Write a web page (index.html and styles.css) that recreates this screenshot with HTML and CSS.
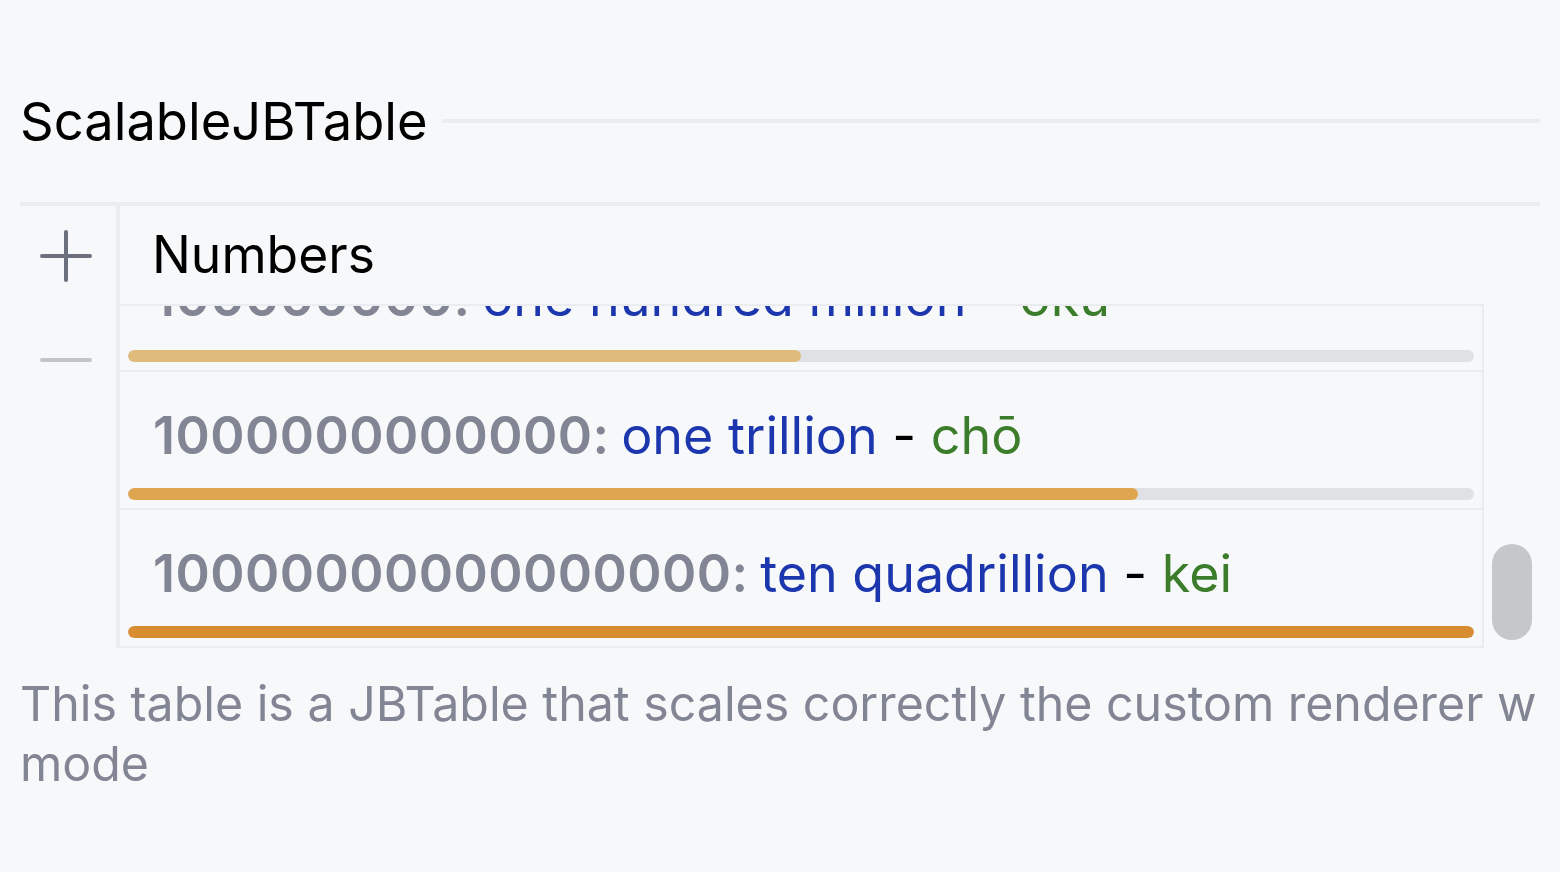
FILE: index.html
```html
<!DOCTYPE html>
<html>
<head>
<meta charset="utf-8">
<link rel="stylesheet" href="styles.css">
</head>
<body>
<div class="page">
  <div class="title-row">
    <div class="title">ScalableJBTable</div>
    <div class="title-sep"></div>
  </div>
  <div class="table">
    <div class="toolbar">
      <svg class="tb-icon" width="52" height="52" viewBox="0 0 52 52"><path d="M2 26H50M26 2V50" stroke="#6c707e" stroke-width="4" stroke-linecap="round" fill="none"/></svg>
      <svg class="tb-icon" width="52" height="52" viewBox="0 0 52 52"><path d="M2 26H50" stroke="#c4c5ca" stroke-width="4" stroke-linecap="round" fill="none"/></svg>
    </div>
    <div class="main">
      <div class="header">Numbers</div>
      <div class="body">
        <div class="viewport">
          <div class="rows">
            <div class="row">
              <div class="row-text"><span class="num">100000000:</span> <span class="en">one hundred million</span> - <span class="jp">oku</span></div>
              <div class="bar"><div class="fill fill-1" style="width:50%"></div></div>
            </div>
            <div class="row">
              <div class="row-text"><span class="num">1000000000000:</span> <span class="en">one trillion</span> - <span class="jp">chō</span></div>
              <div class="bar"><div class="fill fill-2" style="width:75%"></div></div>
            </div>
            <div class="row">
              <div class="row-text"><span class="num">10000000000000000:</span> <span class="en">ten quadrillion</span> - <span class="jp">kei</span></div>
              <div class="bar"><div class="fill fill-3" style="width:100%"></div></div>
            </div>
          </div>
        </div>
        <div class="scrollbar"><div class="thumb"></div></div>
      </div>
    </div>
  </div>
  <div class="desc">
    <div class="desc-line">This table is a JBTable that scales correctly the custom renderer when in presentation</div>
    <div class="desc-line">mode</div>
  </div>
</div>
</body>
</html>
```

FILE: styles.css
```css
html, body {
  margin: 0;
  padding: 0;
  background: #f7f8fa;
}
body {
  font-family: Inter, "Noto Sans", sans-serif;
  color: #000;
  width: 1560px;
  height: 872px;
  overflow: hidden;
}
.page {
  padding: 0 20px;
}
.title-row {
  display: flex;
  align-items: center;
  gap: 14px;
  margin-top: 91px;
}
.title {
  font-size: 52.5px;
  line-height: 60px;
  white-space: nowrap;
}
.title-sep {
  flex: 1;
  height: 4px;
  background: #ebecf0;
}
.table {
  margin-top: 51px;
  border-top: 4px solid #ebecf0;
  display: flex;
}
.toolbar {
  width: 100px;
  border-right: 4px solid #ebecf0;
  display: flex;
  flex-direction: column;
  padding: 24px 0 0 20px;
  box-sizing: border-box;
  gap: 52px;
}
.tb-icon {
  display: block;
}
.main {
  flex: 1;
  display: flex;
  flex-direction: column;
}
.header {
  height: 98px;
  box-sizing: border-box;
  padding: 18px 0 0 32px;
  font-size: 51.6px;
  line-height: 60px;
}
.body {
  display: flex;
}
.viewport {
  width: 1364px;
  height: 344px;
  box-sizing: border-box;
  border-top: 2px solid #ebecf0;
  border-right: 2px solid #ebecf0;
  border-bottom: 2px solid #ebecf0;
  overflow: hidden;
}
.rows {
  margin-top: -74px;
}
.row {
  border-top: 2px solid #ebecf0;
  height: 138px;
  box-sizing: border-box;
  padding: 34px 8px 0 8px;
}
.row-text {
  padding-left: 25px;
  font-size: 52px;
  line-height: 60px;
  white-space: nowrap;
}
.num {
  color: #818594;
  font-weight: 600;
  letter-spacing: 0.45px;
  margin-right: -3px;
}
.en {
  color: #1c37ad;
}
.jp {
  color: #3b7d2a;
}
.bar {
  margin-top: 22px;
  height: 12px;
  border-radius: 6px;
  background: #dfe1e5;
  overflow: hidden;
}
.fill {
  height: 100%;
  border-radius: 6px;
}
.fill-1 { background: #dfbb7c; }
.fill-2 { background: #dfa54f; }
.fill-3 { background: #d98d33; }
.scrollbar {
  flex: 1;
  padding: 240px 0 0 8px;
}
.thumb {
  width: 40px;
  height: 96px;
  border-radius: 20px;
  background: #c6c7ca;
}
.desc {
  margin-top: 26px;
  margin-right: 3px;
  font-size: 48.3px;
  line-height: 60px;
  color: #818594;
  overflow: hidden;
}
.desc-line {
  white-space: nowrap;
}
```
